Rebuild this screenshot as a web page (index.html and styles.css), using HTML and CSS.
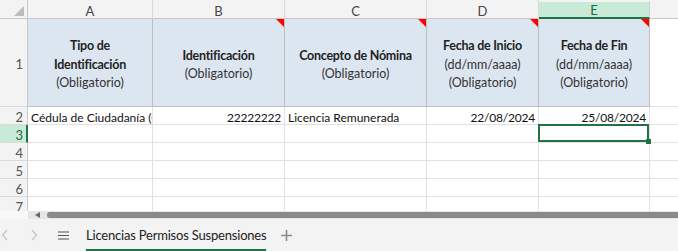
FILE: index.html
```html
<!DOCTYPE html>
<html lang="es">
<head>
<meta charset="utf-8">
<title>Licencias Permisos Suspensiones</title>
<link rel="stylesheet" href="styles.css">
</head>
<body>
<div class="sheet">
  <div class="grid">
    <div class="corner"><span class="corner-tri"></span></div>
    <div class="colhead">A</div>
    <div class="colhead">B</div>
    <div class="colhead">C</div>
    <div class="colhead">D</div>
    <div class="colhead sel">E</div>
    <div class="colhead rest"></div>

    <div class="rowhead tall">1</div>
    <div class="hcell"><b>Tipo de<br>Identificación</b><span>(Obligatorio)</span></div>
    <div class="hcell note"><b>Identificación</b><span>(Obligatorio)</span></div>
    <div class="hcell note"><b>Concepto de Nómina</b><span>(Obligatorio)</span></div>
    <div class="hcell note"><b>Fecha de Inicio</b><span>(dd/mm/aaaa)</span><span>(Obligatorio)</span></div>
    <div class="hcell note"><b>Fecha de Fin</b><span>(dd/mm/aaaa)</span><span>(Obligatorio)</span></div>
    <div class="cell rest"></div>

    <div class="rowhead">2</div>
    <div class="cell">Cédula de Ciudadanía (CC)</div>
    <div class="cell num">22222222</div>
    <div class="cell">Licencia Remunerada</div>
    <div class="cell num">22/08/2024</div>
    <div class="cell num">25/08/2024</div>
    <div class="cell rest"></div>

    <div class="rowhead sel">3</div>
    <div class="cell"></div><div class="cell"></div><div class="cell"></div><div class="cell"></div>
    <div class="cell active"></div>
    <div class="cell rest"></div>

    <div class="rowhead">4</div>
    <div class="cell"></div><div class="cell"></div><div class="cell"></div><div class="cell"></div><div class="cell"></div><div class="cell rest"></div>
    <div class="rowhead">5</div>
    <div class="cell"></div><div class="cell"></div><div class="cell"></div><div class="cell"></div><div class="cell"></div><div class="cell rest"></div>
    <div class="rowhead">6</div>
    <div class="cell"></div><div class="cell"></div><div class="cell"></div><div class="cell"></div><div class="cell"></div><div class="cell rest"></div>
    <div class="rowhead">7</div>
    <div class="cell"></div><div class="cell"></div><div class="cell"></div><div class="cell"></div><div class="cell"></div><div class="cell rest"></div>
  </div>

  <div class="hscroll">
    <div class="hs-gap"></div>
    <div class="hs-track">
      <span class="hs-arrow"></span>
      <div class="hs-thumb"></div>
    </div>
  </div>

  <div class="tabbar">
    <svg class="nav" width="8" height="12" viewBox="0 0 8 12"><path d="M6 1 L1.5 6 L6 11" fill="none" stroke="#c4c4c4" stroke-width="1.2"/></svg>
    <svg class="nav next" width="8" height="12" viewBox="0 0 8 12"><path d="M2 1 L6.5 6 L2 11" fill="none" stroke="#c4c4c4" stroke-width="1.2"/></svg>
    <svg class="menu" width="11" height="9" viewBox="0 0 11 9"><path d="M0 1H11M0 4.5H11M0 8H11" stroke="#555" stroke-width="1.2"/></svg>
    <div class="tab">Licencias Permisos Suspensiones</div>
    <svg class="add" width="11" height="11" viewBox="0 0 11 11"><path d="M5.5 0V11M0 5.5H11" stroke="#8a8a8a" stroke-width="1.6"/></svg>
  </div>
</div>
</body>
</html>
```
FILE: styles.css
```css
* { box-sizing: border-box; }
html, body { margin: 0; padding: 0; background: #fff; }
body { font-family: Lato, "Liberation Sans", sans-serif; color: #222; }

.sheet { width: 678px; height: 251px; overflow: hidden; display: flex; flex-direction: column; }

.grid {
  height: 211px;
  overflow: hidden;
  display: grid;
  grid-template-columns: 28px 125px 132px 142px 112px 111px 1fr;
  grid-template-rows: 19px 88px repeat(6, 18px);
  flex: none;
}

.corner {
  background: #f3f3f3;
  border-right: 1px solid #c8c8c8;
  border-bottom: 1px solid #c8c8c8;
  display: flex; align-items: flex-end; justify-content: flex-end;
  padding: 0 2px 2px 0;
}
.corner-tri {
  width: 0; height: 0;
  border-left: 10px solid transparent;
  border-bottom: 10px solid #bdbdbd;
  margin: 0 1px 0 0;
}

.colhead {
  background: #f3f3f3;
  border-right: 1px solid #dadada;
  border-bottom: 1px solid #c8c8c8;
  font-size: 13px;
  color: #444;
  display: flex; align-items: center; justify-content: center;
  padding-top: 3px;
}
.colhead.sel {
  background: #caead8;
  background-clip: padding-box;
  color: #1a6b3f;
  border-top: 2px solid #f3f3f3;
  padding-top: 1px;
  border-bottom: 2px solid #217346;
  border-right: 1px solid #d0d0d0;
}
.colhead.rest { border-right: none; }

.rowhead {
  background: #f3f3f3;
  border-right: 1px solid #c8c8c8;
  border-bottom: 1px solid #dadada;
  font-size: 13px;
  color: #555;
  display: flex; align-items: center; justify-content: flex-end;
  padding-right: 4px;
  padding-top: 3px;
}
.rowhead.sel {
  background: #caead8;
  color: #1a6b3f;
  border-right: 2px solid #217346;
  padding-right: 3px;
}

.hcell {
  background: #dce6f1;
  border-right: 1px solid #bfbfbf;
  border-bottom: 1px solid #bfbfbf;
  display: flex; flex-direction: column; align-items: center; justify-content: center;
  text-align: center;
  font-size: 12.5px;
  line-height: 18.5px;
  padding-top: 5px;
  position: relative;
}
.hcell b { font-weight: 700; color: #222; letter-spacing: -0.25px; }
.hcell span { font-weight: 400; color: #333; }
.hcell.note::after {
  content: "";
  position: absolute;
  top: 0; right: 0;
  border-top: 8px solid #ff0000;
  border-left: 8px solid transparent;
}

.cell {
  border-right: 1px solid #e1e1e1;
  border-bottom: 1px solid #e1e1e1;
  font-size: 12px;
  line-height: 15px;
  padding: 3px 3px 0 3px;
  white-space: nowrap;
  overflow: hidden;
  position: relative;
  color: #111;
}
.cell.num { text-align: right; letter-spacing: -0.2px; }
.cell.rest { border-right: none; }
.cell.active::after {
  content: "";
  position: absolute;
  top: -1px; left: -1px; right: 0; bottom: 0;
  border: 2px solid #217346;
}
.cell.active::before {
  content: "";
  position: absolute;
  right: -2px; bottom: -2px;
  width: 5px; height: 5px;
  background: #217346;
  z-index: 2;
}
.cell.active { overflow: visible; z-index: 3; }

.hscroll { height: 8px; display: flex; flex: none; }
.hs-gap { width: 28px; background: #f8f8f8; }
.hs-track {
  flex: 1;
  background: #e6e6e6;
  display: flex; align-items: center;
  padding-left: 7px;
}
.hs-arrow {
  width: 0; height: 0;
  border-top: 3px solid transparent;
  border-bottom: 3px solid transparent;
  border-right: 5px solid #666;
}
.hs-thumb {
  flex: 1;
  height: 6px;
  margin-left: 7px;
  background: #8a8a8a;
  border-radius: 3px 0 0 3px;
}

.tabbar {
  flex: 1;
  background: #f3f3f3;
  display: flex;
  align-items: center;
}
.nav { margin-left: 1px; }
.nav.next { margin-left: 21px; }
.menu { margin-left: 20px; }
.tab {
  margin-left: 17px;
  align-self: stretch;
  display: flex; align-items: center;
  font-size: 13px;
  letter-spacing: -0.2px;
  color: #222;
  border-bottom: 2px solid #1e7145;
  padding-top: 1px;
}
.add { margin-left: 15px; }
```
